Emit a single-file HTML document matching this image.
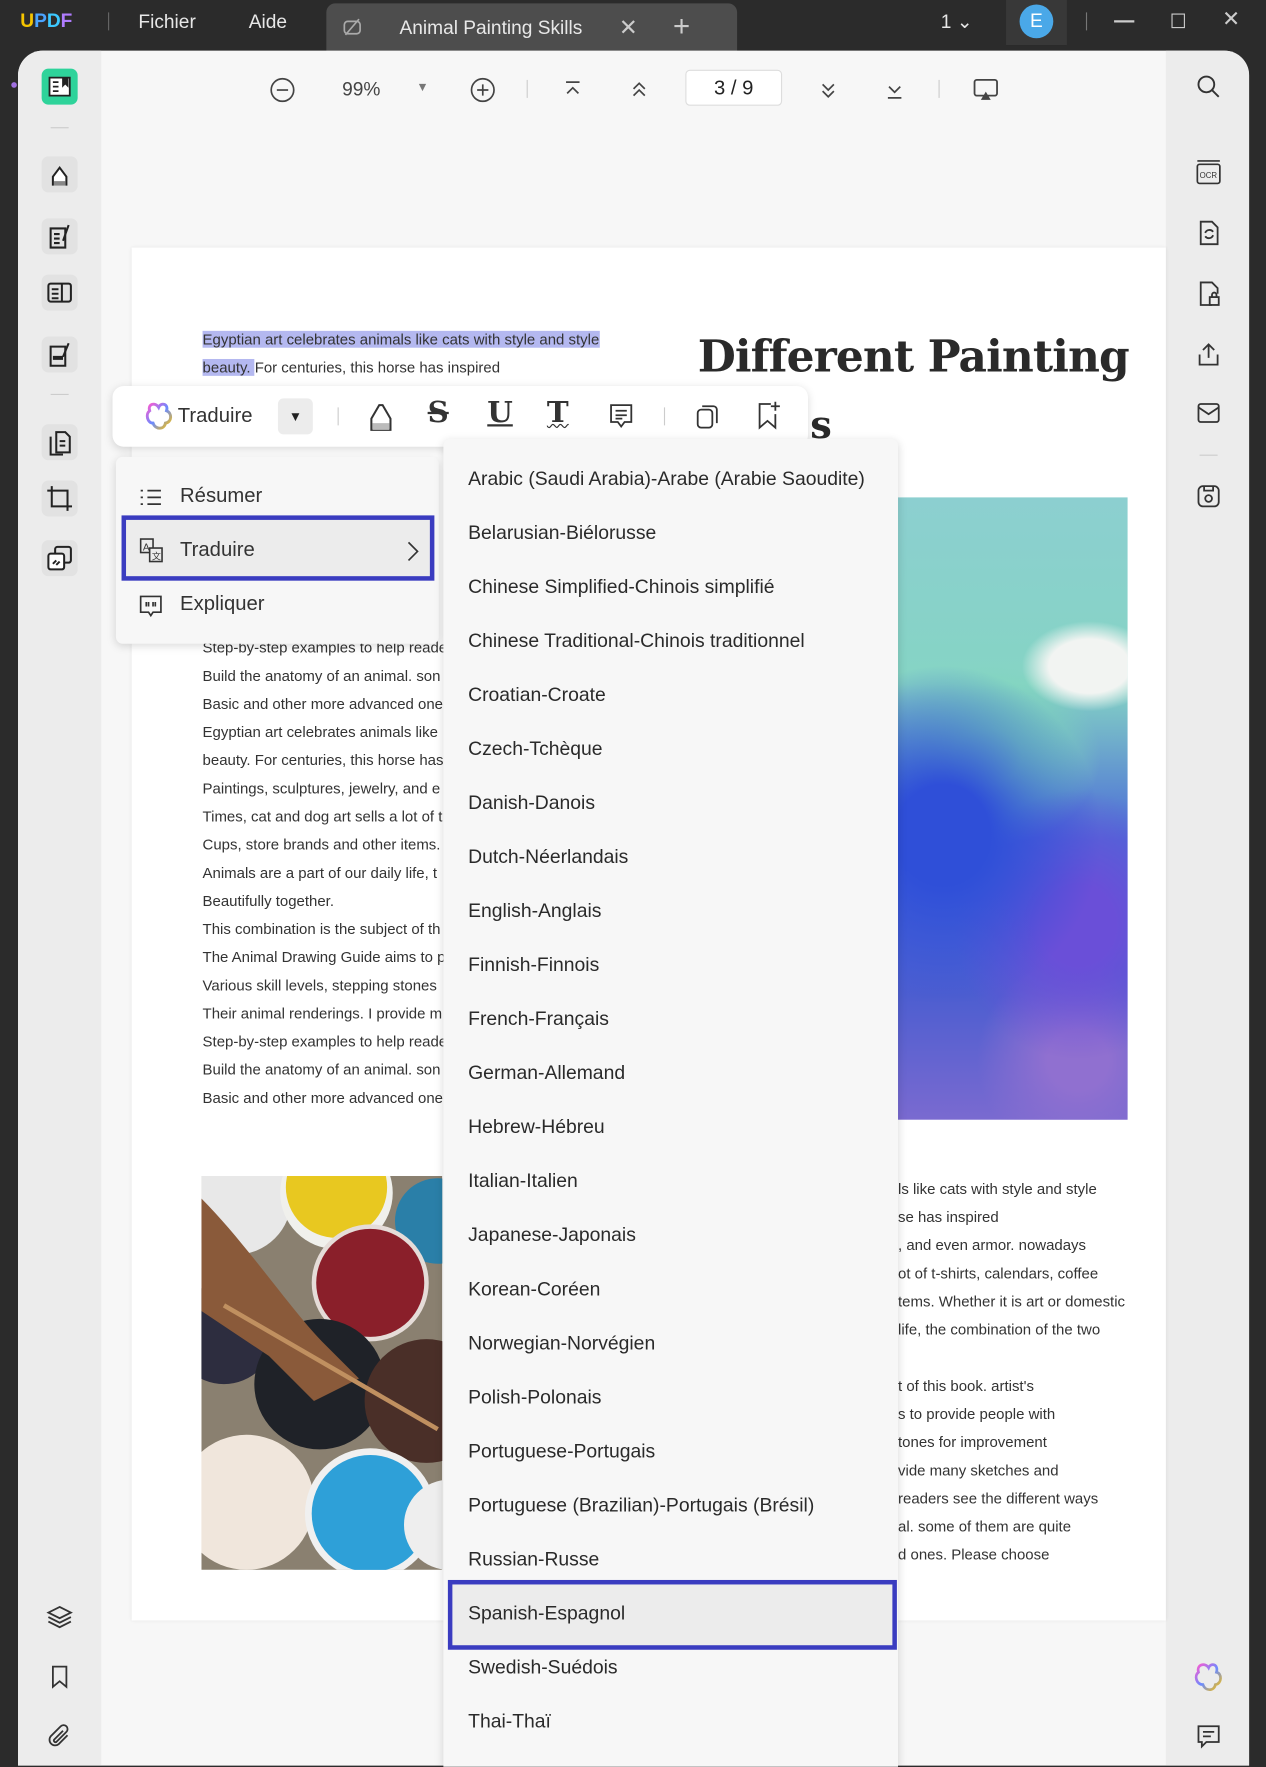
<!DOCTYPE html>
<html><head><meta charset="utf-8"><style>
*{margin:0;padding:0;box-sizing:border-box}
html,body{width:1266px;height:1765px;overflow:hidden;background:#2b2b2b}
#w{position:absolute;left:0;top:0;width:1125px;height:1569px;transform:scale(1.12533);transform-origin:0 0;font-family:"Liberation Sans",sans-serif;color:#222}
.a{position:absolute}
.t{color:#e8e8e8;font-size:17px}
.ic{position:absolute;width:32px;height:32px;border-radius:6px;background:#e2e2e2}
.doc{font-size:13.3px;color:#333;line-height:25px;white-space:nowrap}
.lang{position:absolute;left:416px;font-size:17.2px;color:#2a2a2a;white-space:nowrap}
.tb{position:absolute;top:66px;font-size:17px;color:#444}
</style></head><body><div id="w">
<div class="a" style="left:18px;top:9px;font-weight:bold;font-size:17px"><span style="color:#f5c400">U</span><span style="color:#4aa3ff">P</span><span style="color:#3cc8ff">D</span><span style="color:#b07cff">F</span></div>
<div class="a" style="left:96px;top:11px;width:1px;height:16px;background:#666"></div>
<div class="a t" style="left:123px;top:10px">Fichier</div>
<div class="a t" style="left:221px;top:10px">Aide</div>
<div class="a" style="left:290px;top:3px;width:365px;height:44px;background:#4d4d4d;border-radius:8px 8px 0 0"></div>
<svg class="a" style="left:303px;top:14px" width="20" height="20" viewBox="0 0 20 20" fill="none" stroke="#aaa" stroke-width="1.5"><rect x="3" y="5" width="14" height="11" rx="3"/><path d="M4 17L16 3"/></svg>
<div class="a t" style="left:355px;top:15px">Animal Painting Skills</div>
<div class="a" style="left:550px;top:12px;color:#ccc;font-size:20px">✕</div>
<div class="a" style="left:598px;top:8px;color:#ccc;font-size:26px;font-weight:300">+</div>
<div class="a t" style="left:836px;top:10px">1 ⌄</div>
<div class="a" style="left:894px;top:0;width:54px;height:40px;background:#383838"></div>
<div class="a" style="left:906px;top:4px;width:30px;height:30px;border-radius:50%;background:#4aa8e8;color:#fff;font-size:17px;text-align:center;line-height:30px">E</div>
<div class="a" style="left:965px;top:11px;width:1px;height:16px;background:#777"></div>
<div class="a" style="left:990px;top:18px;width:18px;height:1.5px;background:#ccc"></div>
<div class="a" style="left:1041px;top:12px;width:12px;height:13px;border:1.5px solid #ccc"></div>
<div class="a" style="left:1086px;top:6px;color:#ccc;font-size:19px">✕</div>
<div class="a" style="left:16px;top:45px;width:1094px;height:1524px;background:#f7f7f7;border-radius:22px 22px 0 0;overflow:hidden">
 <div class="a" style="left:0;top:0;width:74px;height:1524px;background:#ececec"></div>
 <div class="a" style="left:1020px;top:0;width:74px;height:1524px;background:#ececec"></div>
</div>
<div class="a" style="left:10px;top:73px;width:5px;height:5px;border-radius:50%;background:#a070e0"></div>
<div class="ic" style="left:37px;top:61px;background:#2ed39a"></div>
<svg class="a" style="left:41px;top:65px" width="24" height="24" fill="none" stroke="#222" stroke-width="1.6"><path d="M3 4H21V20H3z" fill="#fff"/><path d="M6 8H11M6 12H11M6 16H11"/><path d="M15 4V11L17 9L19 11V4" fill="#222"/></svg>
<div class="a" style="left:45px;top:113px;width:16px;height:1px;background:#ccc"></div>
<div class="ic" style="left:37px;top:139px"></div><svg class="a" style="left:41px;top:143px" width="24" height="24"><path d="M6 22V14L12 6L18 14V22" fill="#fff" stroke="#222" stroke-width="1.8"/><path d="M7 18H17V22H7z" fill="#888"/></svg>
<div class="ic" style="left:37px;top:194px"></div><svg class="a" style="left:41px;top:198px" width="24" height="24" fill="none" stroke="#222" stroke-width="1.8"><path d="M4 5H17V22H4z"/><path d="M7 10H12M7 14H12M7 18H12"/><path d="M20 2L15 16"/></svg>
<div class="ic" style="left:37px;top:244px"></div><svg class="a" style="left:41px;top:248px" width="24" height="24" fill="none" stroke="#222" stroke-width="1.8"><rect x="2" y="4" width="20" height="16" rx="2"/><path d="M14 4V20M5 9H11M5 13H11M5 17H11"/></svg>
<div class="ic" style="left:37px;top:299px"></div><svg class="a" style="left:41px;top:303px" width="24" height="24" fill="none" stroke="#222" stroke-width="1.8"><path d="M4 5H17V22H4z"/><path d="M6 15H15" stroke-width="3.5"/><path d="M20 2L15 14"/></svg>
<div class="a" style="left:45px;top:350px;width:16px;height:1px;background:#ccc"></div>
<div class="ic" style="left:37px;top:377px"></div><svg class="a" style="left:41px;top:381px" width="24" height="24" fill="none" stroke="#222" stroke-width="1.8"><path d="M9 3H17L21 7V21H9z"/><path d="M4 7V23H15"/><path d="M12 11H17M12 15H17"/></svg>
<div class="ic" style="left:37px;top:427px"></div><svg class="a" style="left:41px;top:431px" width="24" height="24" fill="none" stroke="#222" stroke-width="1.8"><path d="M5 1V19H23M1 5H19V23"/></svg>
<div class="ic" style="left:37px;top:480px"></div><svg class="a" style="left:41px;top:484px" width="24" height="24" fill="none" stroke="#222" stroke-width="1.8"><rect x="8" y="2" width="14" height="14" rx="2"/><rect x="2" y="8" width="14" height="14" rx="2" fill="#fff"/><path d="M6 17L9 14M9 18L12 15"/></svg>
<svg class="a" style="left:41px;top:1425px" width="24" height="24" fill="none" stroke="#333" stroke-width="1.6"><path d="M12 3L22 8L12 13L2 8z"/><path d="M2 12L12 17L22 12M2 16L12 21L22 16"/></svg>
<svg class="a" style="left:41px;top:1478px" width="24" height="24" fill="none" stroke="#333" stroke-width="1.6"><path d="M6 3H18V21L12 16L6 21z"/></svg>
<svg class="a" style="left:41px;top:1531px" width="24" height="24" fill="none" stroke="#333" stroke-width="1.6"><path d="M19 11L11 19A5 5 0 0 1 4 12L13 3A3 3 0 0 1 18 8L9 17A1.5 1.5 0 0 1 7 15L15 7"/></svg>
<svg class="a" style="left:1062px;top:65px" width="24" height="24" fill="none" stroke="#333" stroke-width="1.7"><circle cx="10" cy="10" r="7"/><path d="M15 15L21 21"/></svg>
<svg class="a" style="left:1062px;top:141px" width="24" height="24" fill="none" stroke="#333" stroke-width="1.5"><rect x="2" y="5" width="20" height="17" rx="2"/><path d="M2 2H22"/><text x="4" y="17" font-size="7" fill="#333" stroke="none" font-family="Liberation Sans">OCR</text></svg>
<svg class="a" style="left:1062px;top:195px" width="24" height="24" fill="none" stroke="#333" stroke-width="1.6"><path d="M5 2H15L20 7V22H5z"/><path d="M9 12A4 4 0 0 1 16 11M16 14A4 4 0 0 1 9 15"/></svg>
<svg class="a" style="left:1062px;top:249px" width="24" height="24" fill="none" stroke="#333" stroke-width="1.6"><path d="M15 22H5V2H15L20 7V12"/><rect x="13" y="15" width="8" height="7"/><path d="M15 15V13A2 2 0 0 1 19 13V15"/></svg>
<svg class="a" style="left:1062px;top:303px" width="24" height="24" fill="none" stroke="#333" stroke-width="1.6"><path d="M4 12V21H20V12M12 15V3M7 8L12 3L17 8"/></svg>
<svg class="a" style="left:1062px;top:355px" width="24" height="24" fill="none" stroke="#333" stroke-width="1.6"><rect x="3" y="4" width="18" height="16" rx="2"/><path d="M3 7L12 13L21 7"/></svg>
<div class="a" style="left:1066px;top:404px;width:16px;height:1px;background:#ccc"></div>
<svg class="a" style="left:1062px;top:429px" width="24" height="24" fill="none" stroke="#333" stroke-width="1.6"><rect x="3" y="3" width="18" height="18" rx="4"/><circle cx="12" cy="14" r="3"/><path d="M8 3V7H16V3"/></svg>
<svg class="a" style="left:1060px;top:1477px" width="28" height="28" fill="none" stroke-width="2.4"><path d="M14 5C11 0 3 2 5 9C1 12 3 20 9 20C11 26 19 26 20 20C26 19 26 10 21 9C23 2 16 0 14 5z" stroke="url(#g)"/><defs><linearGradient id="g" x1="0" y1="0" x2="1" y2="1"><stop offset="0" stop-color="#ff5ad0"/><stop offset=".5" stop-color="#6a8bff"/><stop offset="1" stop-color="#ffc400"/></linearGradient></defs></svg>
<svg class="a" style="left:1062px;top:1531px" width="24" height="24" fill="none" stroke="#333" stroke-width="1.6"><path d="M3 3H21V17H10L6 21V17H3z"/><path d="M7 8H17M7 12H14"/></svg>
<svg class="a" style="left:239px;top:68px" width="24" height="24" fill="none" stroke="#444" stroke-width="1.5"><circle cx="12" cy="12" r="10"/><path d="M7 12H17"/></svg>
<div class="tb" style="left:304px;top:70px">99%</div>
<div class="tb" style="left:370px;top:72px;font-size:11px;color:#777">▼</div>
<svg class="a" style="left:417px;top:68px" width="24" height="24" fill="none" stroke="#444" stroke-width="1.5"><circle cx="12" cy="12" r="10"/><path d="M7 12H17M12 7V17"/></svg>
<div class="a" style="left:468px;top:71px;width:1px;height:16px;background:#ccc"></div>
<svg class="a" style="left:498px;top:69px" width="22" height="22" fill="none" stroke="#444" stroke-width="1.5"><path d="M5 4H17M6 14L11 9L16 14"/></svg>
<svg class="a" style="left:557px;top:69px" width="22" height="22" fill="none" stroke="#444" stroke-width="1.5"><path d="M6 10L11 5L16 10M6 16L11 11L16 16"/></svg>
<div class="a" style="left:609px;top:62px;width:86px;height:32px;background:#fff;border:1px solid #ddd;border-radius:4px;text-align:center;font-size:18px;line-height:30px;color:#222">3 / 9</div>
<svg class="a" style="left:725px;top:69px" width="22" height="22" fill="none" stroke="#444" stroke-width="1.5"><path d="M6 6L11 11L16 6M6 12L11 17L16 12"/></svg>
<svg class="a" style="left:784px;top:69px" width="22" height="22" fill="none" stroke="#444" stroke-width="1.5"><path d="M6 8L11 13L16 8M5 18H17"/></svg>
<div class="a" style="left:834px;top:71px;width:1px;height:16px;background:#ccc"></div>
<svg class="a" style="left:864px;top:67px" width="24" height="24" fill="none" stroke="#444" stroke-width="1.6"><rect x="2" y="4" width="20" height="14" rx="2"/><path d="M12 16L9 21H15z" fill="#444"/></svg>
<div class="a" style="left:117px;top:220px;width:919px;height:1220px;background:#fff;box-shadow:0 0 3px rgba(0,0,0,.08)"></div>
<div class="a doc" style="left:180px;top:289px"><span style="background:#b4b8f0">Egyptian art celebrates animals like cats with style and style</span><br><span style="background:#b4b8f0">beauty. </span>For centuries, this horse has inspired<br><br>Cups, store brands and other items.</div>
<div class="a" style="left:620px;top:294px;font-family:'DejaVu Serif','Liberation Serif',serif;font-weight:bold;font-size:39px;color:#2a2a2a;white-space:nowrap;letter-spacing:-0.8px">Different Painting</div>
<div class="a" style="left:720px;top:358px;font-family:'DejaVu Serif',serif;font-weight:bold;font-size:34px;color:#2a2a2a">s</div>
<div class="a doc" style="left:180px;top:563px">Step-by-step examples to help reade<br>Build the anatomy of an animal. son<br>Basic and other more advanced one<br>Egyptian art celebrates animals like<br>beauty. For centuries, this horse has<br>Paintings, sculptures, jewelry, and e<br>Times, cat and dog art sells a lot of t<br>Cups, store brands and other items.<br>Animals are a part of our daily life, t<br>Beautifully together.<br>This combination is the subject of th<br>The Animal Drawing Guide aims to pr<br>Various skill levels, stepping stones<br>Their animal renderings. I provide m<br>Step-by-step examples to help reade<br>Build the anatomy of an animal. son<br>Basic and other more advanced one</div>
<div class="a doc" style="left:798px;top:1044px">ls like cats with style and style<br>se has inspired<br>, and even armor. nowadays<br>ot of t-shirts, calendars, coffee<br>tems. Whether it is art or domestic<br>life, the combination of the two<br><br>t of this book. artist's<br>s to provide people with<br>tones for improvement<br>vide many sketches and<br>readers see the different ways<br>al. some of them are quite<br>d ones. Please choose</div>
<div class="a" style="left:798px;top:442px;width:204px;height:553px;background:
radial-gradient(ellipse 60px 40px at 170px 150px,#f2f4f2 60%,transparent 100%),
radial-gradient(ellipse 140px 150px at 40px 300px,#2f4fd8 30%,transparent 100%),
radial-gradient(ellipse 110px 120px at 160px 380px,#6a4fd8 30%,transparent 100%),
radial-gradient(ellipse 90px 90px at 160px 500px,#9070d0 30%,transparent 100%),
radial-gradient(ellipse 100px 80px at 80px 230px,#7ed8b8 30%,transparent 100%),
linear-gradient(180deg,#8ccfd0 0%,#85d4c4 30%,#4a6ad8 55%,#4d5ed0 80%,#7a6ad0 100%)"></div>
<svg class="a" style="left:179px;top:1045px" width="214" height="350" viewBox="0 0 214 350"><rect width="214" height="350" fill="#8a8070"/><circle cx="30" cy="20" r="50" fill="#e8e8e8"/><circle cx="120" cy="15" r="50" fill="#f0f0ec"/><circle cx="120" cy="10" r="45" fill="#e8c820"/><circle cx="210" cy="40" r="38" fill="#2a7fa8"/><circle cx="150" cy="95" r="52" fill="#e5dcd8"/><circle cx="150" cy="95" r="48" fill="#8a1f2a"/><circle cx="20" cy="140" r="45" fill="#2d2d3f"/><circle cx="105" cy="185" r="58" fill="#1f2228"/><circle cx="200" cy="200" r="55" fill="#4a2f28"/><circle cx="40" cy="290" r="60" fill="#f0e6dc"/><circle cx="150" cy="300" r="58" fill="#f0f0f0"/><circle cx="150" cy="300" r="52" fill="#2ea0d8"/><circle cx="220" cy="310" r="40" fill="#eeeeee"/><path d="M0 20C40 60 80 120 110 150L140 180L100 200L60 160L0 120z" fill="#8a5a3a"/><path d="M20 115L210 225" stroke="#c09060" stroke-width="4"/></svg>
<div class="a" style="left:100px;top:343px;width:618px;height:54px;background:#fff;border-radius:10px;box-shadow:0 2px 8px rgba(0,0,0,.15)"></div>
<svg class="a" style="left:128px;top:357px" width="26" height="26" fill="none" stroke-width="2.6"><path d="M13 5C10 0 3 2 5 8C1 11 3 19 8 19C10 25 18 25 19 19C25 18 25 10 20 8C22 2 15 0 13 5z" stroke="url(#g)"/></svg>
<div class="a" style="left:158px;top:359px;font-size:18px;color:#333">Traduire</div>
<div class="a" style="left:247px;top:354px;width:31px;height:32px;background:#ececec;border-radius:5px;font-size:12px;text-align:center;line-height:32px;color:#222">▼</div>
<div class="a" style="left:300px;top:362px;width:1px;height:16px;background:#ccc"></div>
<svg class="a" style="left:326px;top:356px" width="26" height="28"><path d="M4 26V16L11 4H14L21 16V26z" fill="#fff" stroke="#333" stroke-width="1.8"/><path d="M5 20H20V26H5z" fill="#bbb"/></svg>
<div class="a" style="left:380px;top:352px;font-family:'DejaVu Serif',serif;font-size:26px;font-weight:bold;color:#333;text-decoration:line-through">S</div>
<div class="a" style="left:433px;top:352px;font-family:'DejaVu Serif',serif;font-size:26px;font-weight:bold;color:#333;text-decoration:underline">U</div>
<div class="a" style="left:486px;top:352px;font-family:'DejaVu Serif',serif;font-size:26px;font-weight:bold;color:#333;text-decoration:underline wavy;text-decoration-thickness:1px">T</div>
<svg class="a" style="left:540px;top:357px" width="24" height="26" fill="none" stroke="#333" stroke-width="1.6"><path d="M3 3H21V18H15L12 22L9 18H3z"/><path d="M7 8H17M7 12H17M7 15H13"/></svg>
<div class="a" style="left:590px;top:362px;width:1px;height:16px;background:#ccc"></div>
<svg class="a" style="left:616px;top:357px" width="24" height="26" fill="none" stroke="#333" stroke-width="1.6"><rect x="4" y="7" width="13" height="16" rx="3"/><path d="M8 4H18A3 3 0 0 1 21 7V19"/></svg>
<svg class="a" style="left:670px;top:355px" width="26" height="28" fill="none" stroke="#333" stroke-width="1.6"><path d="M15 4H5V25L12 19L19 25V13M19 2V10M15 6H23"/></svg>
<div class="a" style="left:103px;top:406px;width:287px;height:166px;background:#f7f7f7;border-radius:6px;box-shadow:0 2px 8px rgba(0,0,0,.15)"></div>
<svg class="a" style="left:123px;top:432px" width="22" height="20" fill="none" stroke="#333" stroke-width="1.5"><path d="M2 4H4M8 4H20M2 10H4M8 10H20M2 16H4M8 16H20"/></svg>
<div class="a" style="left:160px;top:430px;font-size:18px;color:#333">Résumer</div>
<div class="a" style="left:108px;top:458px;width:278px;height:58px;border:4px solid #3a3cc0;background:#ececec"></div>
<svg class="a" style="left:123px;top:477px" width="24" height="24" fill="none" stroke="#333" stroke-width="1.4"><rect x="2" y="2" width="11" height="12"/><rect x="10" y="10" width="11" height="12" fill="#ececec"/><text x="4" y="12" font-size="9" fill="#333" stroke="none">A</text><text x="12" y="20" font-size="8" fill="#333" stroke="none">文</text></svg>
<div class="a" style="left:160px;top:478px;font-size:18px;color:#333">Traduire</div>
<svg class="a" style="left:360px;top:480px" width="14" height="20" fill="none" stroke="#333" stroke-width="1.5"><path d="M3 2L11 10L3 18"/></svg>
<svg class="a" style="left:123px;top:528px" width="22" height="22" fill="none" stroke="#333" stroke-width="1.5"><path d="M2 2H20V16H13L11 19L9 16H2z"/><path d="M7 7V11M9 7V11M13 7V11M15 7V11"/></svg>
<div class="a" style="left:160px;top:526px;font-size:18px;color:#333">Expliquer</div>
<div class="a" style="left:394px;top:390px;width:404px;height:1180px;background:#f7f7f7;border-radius:6px 6px 0 0;box-shadow:0 2px 8px rgba(0,0,0,.15)"></div>
<div class="a" style="left:398px;top:1404px;width:399px;height:62px;border:4px solid #3a3cc0;background:#ececec"></div>
<div class="lang" style="top:415px">Arabic (Saudi Arabia)-Arabe (Arabie Saoudite)</div>
<div class="lang" style="top:463px">Belarusian-Biélorusse</div>
<div class="lang" style="top:511px">Chinese Simplified-Chinois simplifié</div>
<div class="lang" style="top:559px">Chinese Traditional-Chinois traditionnel</div>
<div class="lang" style="top:607px">Croatian-Croate</div>
<div class="lang" style="top:655px">Czech-Tchèque</div>
<div class="lang" style="top:703px">Danish-Danois</div>
<div class="lang" style="top:751px">Dutch-Néerlandais</div>
<div class="lang" style="top:799px">English-Anglais</div>
<div class="lang" style="top:847px">Finnish-Finnois</div>
<div class="lang" style="top:895px">French-Français</div>
<div class="lang" style="top:943px">German-Allemand</div>
<div class="lang" style="top:991px">Hebrew-Hébreu</div>
<div class="lang" style="top:1039px">Italian-Italien</div>
<div class="lang" style="top:1087px">Japanese-Japonais</div>
<div class="lang" style="top:1135px">Korean-Coréen</div>
<div class="lang" style="top:1183px">Norwegian-Norvégien</div>
<div class="lang" style="top:1231px">Polish-Polonais</div>
<div class="lang" style="top:1279px">Portuguese-Portugais</div>
<div class="lang" style="top:1327px">Portuguese (Brazilian)-Portugais (Brésil)</div>
<div class="lang" style="top:1375px">Russian-Russe</div>
<div class="lang" style="top:1423px">Spanish-Espagnol</div>
<div class="lang" style="top:1471px">Swedish-Suédois</div>
<div class="lang" style="top:1519px">Thai-Thaï</div>
</div></body></html>
